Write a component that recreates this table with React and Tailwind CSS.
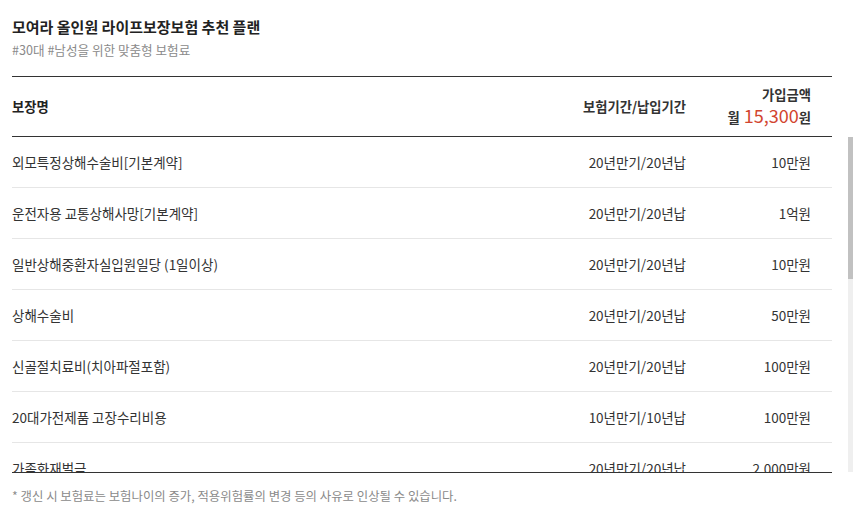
const rows = [
  ['외모특정상해수술비[기본계약]', '20년만기/20년납', '10만원'],
  ['운전자용 교통상해사망[기본계약]', '20년만기/20년납', '1억원'],
  ['일반상해중환자실입원일당 (1일이상)', '20년만기/20년납', '10만원'],
  ['상해수술비', '20년만기/20년납', '50만원'],
  ['신골절치료비(치아파절포함)', '20년만기/20년납', '100만원'],
  ['20대가전제품 고장수리비용', '10년만기/10년납', '100만원'],
  ['가족화재벌금', '20년만기/20년납', '2,000만원'],
  ['화재손해(건물)', '20년만기/20년납', '1,000만원'],
  ['화재손해(가재도구)', '20년만기/20년납', '1,000만원'],
  ['가족일상생활중배상책임', '20년만기/20년납', '1억원'],
  ['임시거주비', '20년만기/20년납', '100만원'],
  ['골절진단비(치아파절제외)', '20년만기/20년납', '20만원'],
  ['깁스치료비', '20년만기/20년납', '10만원'],
  ['자동차사고벌금', '20년만기/20년납', '2,000만원'],
  ['교통사고처리지원금', '20년만기/20년납', '3,000만원'],
];

export default function App() {
  return (
    <div className="bg-white min-h-[511px] px-3 pt-[17px] text-[#333] font-['Noto_Sans_CJK_KR',sans-serif]">
      <h1 className="text-[15px] font-bold leading-5 text-[#222]">모여라 올인원 라이프보장보험 추천 플랜</h1>
      <p className="mt-[5px] text-[12.6px] leading-4 text-[#8a8a8a]">#30대 #남성을 위한 맞춤형 보험료</p>

      <div className="mt-[18px] w-[820px] border-t border-b border-[#333] grid grid-cols-[1fr_auto_146px] h-[61px] items-center">
        <div className="text-[13.3px] font-bold text-[#222]">보장명</div>
        <div className="text-[13.3px] font-bold text-[#333] text-right">보험기간/납입기간</div>
        <div className="pr-[21px] text-right text-[13.3px] font-bold text-[#333] leading-[20px]">
          <div>가입금액</div>
          <div className="flex items-baseline justify-end">
            <span>월</span>
            <span className="ml-[4px] text-[18px] font-normal text-[#d2452f]">15,300</span>
            <span>원</span>
          </div>
        </div>
      </div>

      <div className="flex h-[335px]">
        <div className="w-[820px] shrink-0 overflow-hidden">
          {rows.map(([name, period, amount]) => (
            <div key={name} className="grid grid-cols-[1fr_auto_146px] h-[51px] items-center border-b border-[#e6e6e6] text-[13.5px]">
              <div>{name}</div>
              <div className="text-right">{period}</div>
              <div className="pr-[21px] text-right">{amount}</div>
            </div>
          ))}
        </div>
        <div className="ml-[16px] w-[5px] shrink-0 bg-[#efefef]">
          <div className="h-[142px] bg-[#c1c1c1]" />
        </div>
      </div>
      <div className="w-[820px] border-t border-[#333]" />

      <p className="mt-[14px] text-[12.4px] text-[#8a8a8a]">* 갱신 시 보험료는 보험나이의 증가, 적용위험률의 변경 등의 사유로 인상될 수 있습니다.</p>
    </div>
  );
}
